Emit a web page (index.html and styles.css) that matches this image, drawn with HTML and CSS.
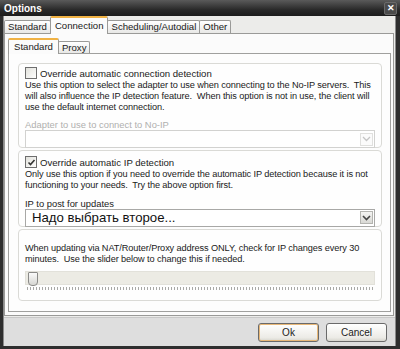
FILE: index.html
```html
<!DOCTYPE html>
<html>
<head>
    <title>Options</title>
    <link rel="stylesheet" href="styles.css">
</head>
<body>
    <div class="window">
        <div class="titlebar">
            <span class="title">Options</span>
            <span class="close-btn">&#x2715;</span>
        </div>

        <div class="window-body">
            <div class="tabs">
                <div class="tab">Standard</div>
                <div class="tab active">Connection</div>
                <div class="tab">Scheduling/Autodial</div>
                <div class="tab">Other</div>
            </div>

            <div class="panel">
                <div class="tabs inner-tabs">
                    <div class="tab active">Standard</div>
                    <div class="tab">Proxy</div>
                </div>

                <div class="subpanel">
                    <div class="group group-adapter">
                        <label class="check-row">
                            <span class="checkbox"></span>
                            Override automatic connection detection
                        </label>
                        <p class="desc">Use this option to select the adapter to use when connecting to the No-IP servers.&nbsp; This will also influence the IP detection feature.&nbsp; When this option is not in use, the client will use the default internet connection.</p>
                        <div class="field-label disabled">Adapter to use to connect to No-IP</div>
                        <div class="combo disabled">
                            <span class="combo-text"></span>
                            <span class="combo-arrow">
                                <svg width="9" height="6" viewBox="0 0 9 6"><path d="M1 1 L4.5 4.5 L8 1" fill="none" stroke="#c4c4c4" stroke-width="1.3"/></svg>
                            </span>
                        </div>
                    </div>

                    <div class="group group-ip">
                        <label class="check-row">
                            <span class="checkbox checked">
                                <svg width="9" height="9" viewBox="0 0 9 9"><path d="M1.5 4.5 L3.5 6.5 L7.5 2" fill="none" stroke="#333" stroke-width="1.6"/></svg>
                            </span>
                            Override automatic IP detection
                        </label>
                        <p class="desc">Only use this option if you need to override the automatic IP detection because it is not functioning to your needs.&nbsp; Try the above option first.</p>
                        <div class="field-label">IP to post for updates</div>
                        <div class="combo">
                            <span class="combo-text big">Надо выбрать второе...</span>
                            <span class="combo-arrow">
                                <svg width="9" height="6" viewBox="0 0 9 6"><path d="M1 1 L4.5 4.5 L8 1" fill="none" stroke="#444" stroke-width="1.6"/></svg>
                            </span>
                        </div>
                    </div>

                    <div class="group group-slider">
                        <p class="desc">When updating via NAT/Router/Proxy address ONLY, check for IP changes every 30 minutes.&nbsp; Use the slider below to change this if needed.</p>
                        <div class="slider">
                            <div class="slider-track">
                                <span class="slider-thumb"></span>
                            </div>
                            <div class="slider-ticks"></div>
                        </div>
                    </div>
                </div>
            </div>

            <div class="footer">
                <button class="btn default">Ok</button>
                <button class="btn">Cancel</button>
            </div>
        </div>
    </div>
</body>
</html>
```

FILE: styles.css
```css
body {
    margin: 0;
    background: #2b2b2b;
    font-family: "Liberation Sans", Arial, sans-serif;
    font-size: 10px;
    color: #1a1a1a;
}

.window {
    width: 400px;
    height: 349px;
    display: flex;
    flex-direction: column;
    background: #2e2e2e;
    box-sizing: border-box;
}

.titlebar {
    height: 16px;
    display: flex;
    align-items: center;
    justify-content: space-between;
    padding: 0 3px 0 4px;
    background: linear-gradient(#5a5a5a, #2a2a2a 60%, #1c1c1c);
    color: #fff;
}

.title {
    font-weight: bold;
    font-size: 10px;
}

.close-btn {
    width: 11px;
    height: 11px;
    font-size: 9px;
    font-weight: bold;
    line-height: 11px;
    text-align: center;
    color: #fff;
    background: #4a4a4a;
    border: 1px solid #6a6a6a;
    border-radius: 2px;
}

.window-body {
    flex: 1;
    margin: 0 4px 3px 3px;
    display: flex;
    flex-direction: column;
    background: #ececea;
    border-left: 1px solid #8a8a8a;
    border-right: 1px solid #8a8a8a;
}

.tabs {
    display: flex;
    align-items: flex-end;
    height: 17px;
    position: relative;
    z-index: 1;
}

.tab {
    height: 12px;
    padding: 0 3px;
    line-height: 12px;
    margin-right: -1px;
    font-size: 9.6px;
    background: linear-gradient(#ffffff, #e8e8e6);
    border: 1px solid #9a9a98;
    border-bottom: none;
    border-radius: 2px 2px 0 0;
}

.tab.active {
    height: 16px;
    line-height: 15px;
    background: #fbfbfb;
    border-top: 2px solid #f0b244;
    margin-bottom: -1px;
    padding: 0 4px;
    position: relative;
    z-index: 2;
}

.panel {
    flex: 1;
    margin-right: 1px;
    display: flex;
    flex-direction: column;
    padding: 3px 2px 3px 3px;
    background: #fbfbfb;
    border: 1px solid #9a9a98;
}

.inner-tabs {
    height: 16px;
}

.inner-tabs .tab {
    height: 11px;
    line-height: 11px;
}

.inner-tabs .tab.active {
    height: 14px;
    line-height: 14px;
    padding: 0 5px;
}

.subpanel {
    flex: 1;
    padding: 9px 8px 0 9px;
    background: #fdfdfd;
    border: 1px solid #a0a09e;
    display: flex;
    flex-direction: column;
    gap: 2px;
}

.group {
    border: 1px solid #dadad6;
    border-radius: 4px;
    padding: 3px 6px 0 6px;
    background: #fefefe;
}

.group-adapter {
    height: 80px;
}

.group-ip {
    height: 70px;
    padding-top: 5px;
}

.group-slider {
    height: 57px;
    padding-top: 13px;
}

.check-row {
    display: flex;
    align-items: center;
    gap: 3px;
    height: 12px;
    margin-bottom: 1px;
    font-size: 9.6px;
}

.checkbox {
    width: 10px;
    height: 10px;
    display: flex;
    align-items: center;
    justify-content: center;
    border: 1px solid #6e6e6e;
    background: linear-gradient(135deg, #e2e2dc, #fdfdfd);
}

.desc {
    margin: 0;
    line-height: 10.8px;
    font-size: 9.2px;
    letter-spacing: -0.1px;
}

.field-label {
    margin-top: 7px;
    line-height: 11px;
    font-size: 9.4px;
}

.field-label.disabled {
    margin-top: 7px;
    color: #b0b0ae;
}

.combo {
    height: 16px;
    display: flex;
    align-items: center;
    justify-content: space-between;
    border: 1px solid #a8a8a6;
    background: #fff;
    padding: 0 1px 0 6px;
}

.combo.disabled {
    border-color: #d2d2d0;
}

.combo-text.big {
    font-size: 13.2px;
    color: #111;
}

.combo-arrow {
    width: 13px;
    height: 13px;
    display: flex;
    align-items: center;
    justify-content: center;
    background: linear-gradient(#f4f4f2, #d8d8d4);
    border: 1px solid #b4b4b0;
    box-sizing: border-box;
}

.combo.disabled .combo-arrow {
    background: #fbfbfb;
    border-color: #e0e0de;
}

.slider {
    margin-top: 6px;
}

.slider-track {
    height: 12px;
    background: #ecebe4;
    border: 1px solid #e2e1da;
    position: relative;
}

.slider-thumb {
    position: absolute;
    left: 2px;
    top: 0;
    width: 8px;
    height: 12px;
    background: linear-gradient(#fafafa, #d6d6d2);
    border: 1px solid #8a8a88;
    border-radius: 1px 1px 4px 4px;
}

.slider-ticks {
    height: 3px;
    margin: 2px 0 0 2px;
    background: repeating-linear-gradient(90deg, #a8a8a6 0, #a8a8a6 1px, transparent 1px, transparent 3px);
}

.footer {
    height: 28px;
    margin-top: 1px;
    display: flex;
    align-items: center;
    justify-content: flex-end;
    gap: 7px;
    padding-right: 8px;
    background: #dedede;
    border-top: 1px solid #c8c8c8;
}

.btn {
    width: 61px;
    height: 19px;
    font-family: "Liberation Sans", Arial, sans-serif;
    font-size: 10px;
    color: #222;
    background: linear-gradient(#ffffff, #ecebe6 80%, #d6d5ce);
    border: 1px solid #6a6a6a;
    border-radius: 3px;
    padding: 0;
}

.btn.default {
    box-shadow: inset 0 0 0 1px #e8b878;
}
```
